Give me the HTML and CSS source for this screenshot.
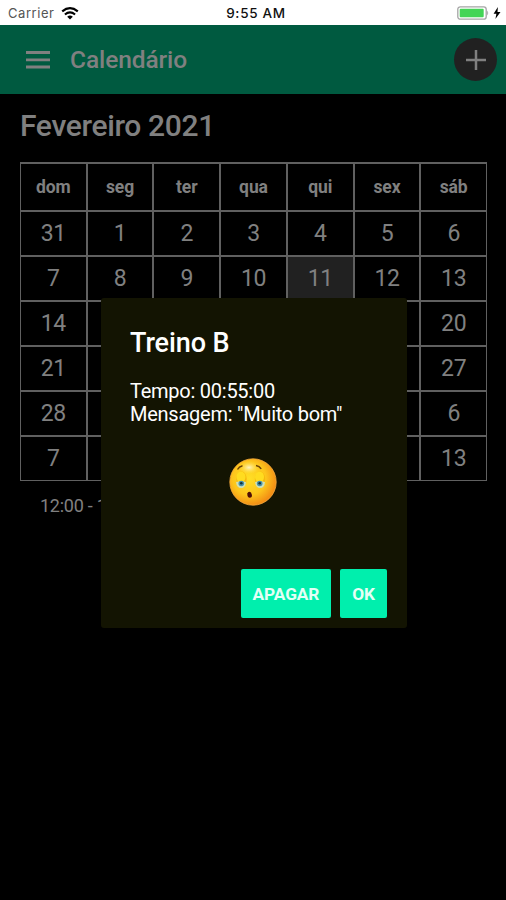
FILE: index.html
```html
<!DOCTYPE html>
<html lang="pt-BR">
<head>
    <meta charset="UTF-8">
    <meta name="viewport" content="width=device-width, initial-scale=1.0">
    <title>Calendário</title>
    <link rel="stylesheet" href="styles.css">
</head>
<body>
    <div class="status-bar">
        <div class="status-left">
            <span class="carrier">Carrier</span>
            <svg class="wifi" viewBox="0 0 18 13" width="18" height="13">
                <path d="M1.2 4.4 Q9 -2 16.8 4.4" fill="none" stroke="#000" stroke-width="2.2"/>
                <path d="M3.9 7.5 Q9 3.2 14.1 7.5" fill="none" stroke="#000" stroke-width="2.1"/>
                <path d="M6.2 9.7 Q9 7.4 11.8 9.7 L9 12.6 Z" fill="#000"/>
            </svg>
        </div>
        <span class="clock">9:55 AM</span>
        <div class="status-right">
            <svg viewBox="0 0 32 14" width="32" height="14">
                <rect x="0.8" y="0.8" width="28.4" height="12.4" rx="2.5" fill="#fff" stroke="#a5a5a5" stroke-width="1.3"/>
                <rect x="2.7" y="2.7" width="24" height="8.6" rx="1" fill="#43d556"/>
                <path d="M30.2 4.6 Q32.2 7 30.2 9.4 Z" fill="#a5a5a5"/>
            </svg>
            <svg viewBox="0 0 8 12" width="8" height="12">
                <path d="M4.9 0 L0.6 6.8 H3.4 L2.4 12 L7.5 4.9 H4.5 Z" fill="#000"/>
            </svg>
        </div>
    </div>

    <header class="toolbar">
        <svg class="menu-icon" viewBox="0 0 24 18" width="24" height="18">
            <path d="M0 1.5 H24 M0 8.8 H24 M0 16 H24" stroke="#808080" stroke-width="2.8"/>
        </svg>
        <h1>Calendário</h1>
        <button class="add-btn" aria-label="Adicionar">
            <svg viewBox="0 0 20 20" width="20" height="20">
                <path d="M0 10 H20 M10 0 V20" stroke="#808080" stroke-width="2.5"/>
            </svg>
        </button>
    </header>

    <main>
        <h2>Fevereiro 2021</h2>
        <div class="calendar">
            <div class="week-day">dom</div>
            <div class="week-day">seg</div>
            <div class="week-day">ter</div>
            <div class="week-day">qua</div>
            <div class="week-day">qui</div>
            <div class="week-day">sex</div>
            <div class="week-day">sáb</div>

            <div>31</div><div>1</div><div>2</div><div>3</div><div>4</div><div>5</div><div>6</div>
            <div>7</div><div>8</div><div>9</div><div>10</div><div class="today">11</div><div>12</div><div>13</div>
            <div>14</div><div></div><div></div><div></div><div></div><div></div><div>20</div>
            <div>21</div><div></div><div></div><div></div><div></div><div></div><div>27</div>
            <div>28</div><div></div><div></div><div></div><div></div><div></div><div>6</div>
            <div>7</div><div></div><div></div><div></div><div></div><div></div><div>13</div>
        </div>
        <p class="event">12:00 - 1</p>
    </main>

    <!-- Detalhe do treino -->
    <div class="modal">
        <h3>Treino B</h3>
        <p>Tempo: 00:55:00<br>Mensagem: "Muito bom"</p>
        <svg class="emoji" viewBox="0 0 48 48" width="48" height="48">
            <defs>
                <radialGradient id="face" cx="0.42" cy="0.42" r="0.6">
                    <stop offset="0" stop-color="#ffdf25"/>
                    <stop offset="0.6" stop-color="#fdc51c"/>
                    <stop offset="1" stop-color="#f28a14"/>
                </radialGradient>
                <radialGradient id="shine">
                    <stop offset="0" stop-color="#fff3c4"/>
                    <stop offset="1" stop-color="#ffdf45" stop-opacity="0"/>
                </radialGradient>
            </defs>
            <circle cx="24" cy="24" r="23.2" fill="url(#face)" stroke="#f5a93c" stroke-width="0.8"/>
            <ellipse cx="20" cy="9.5" rx="10" ry="6.5" fill="url(#shine)"/>
            <ellipse cx="12.5" cy="21" rx="5.2" ry="7.5" fill="#f5b80f"/>
            <ellipse cx="31" cy="21" rx="5.2" ry="7.5" fill="#f5b80f"/>
            <ellipse cx="12" cy="19" rx="4.5" ry="5.5" fill="#ffdc20"/>
            <ellipse cx="30.5" cy="19" rx="4.5" ry="5.5" fill="#ffdc20"/>
            <path d="M7 24 Q12 22.5 17 24 Q16.5 30 12 30 Q7.8 30 7 24 Z" fill="#cfe0b8"/>
            <path d="M26 24 Q31 22.5 36 24 Q35.5 30 31 30 Q26.8 30 26 24 Z" fill="#cfe0b8"/>
            <circle cx="12.3" cy="25.5" r="2.8" fill="#4790a8"/>
            <circle cx="30.7" cy="25.5" r="2.8" fill="#4790a8"/>
            <circle cx="12.3" cy="25.2" r="1.3" fill="#12303c"/>
            <circle cx="30.7" cy="25.2" r="1.3" fill="#12303c"/>
            <path d="M8.5 11.5 Q10 8.6 13.5 7.8 M27 7.5 Q30.5 8 32.2 10.8" fill="none" stroke="#6b4208" stroke-width="1.5"/>
            <path d="M18.3 35.5 Q19.5 32.5 22 34.5 Q24.3 39.3 21 39.8 Q18.3 40 18.3 35.5 Z" fill="#4e0d08"/>
        </svg>
        <div class="modal-actions">
            <button>APAGAR</button>
            <button>OK</button>
        </div>
    </div>
</body>
</html>
```

FILE: styles.css
```css
:root {
    --muted: #808080;
    --line: #606060;
    --accent: #00efad;
}

* {
    box-sizing: border-box;
    margin: 0;
    padding: 0;
}

body {
    font-family: Roboto, sans-serif;
    background: #000;
    color: var(--muted);
    height: 900px;
    overflow: hidden;
}

.status-bar {
    display: grid;
    grid-template-columns: 1fr auto 1fr;
    align-items: center;
    height: 25px;
    padding: 1px 5px 0 8px;
    background: #fff;
    font-family: Inter, sans-serif;
    font-size: 13px;
    color: #111;
}

.status-left,
.status-right {
    display: flex;
    align-items: center;
    gap: 7px;
}

.status-right {
    justify-content: flex-end;
    gap: 4px;
}

.carrier {
    color: #555;
    letter-spacing: 0.55px;
}

.clock {
    font-size: 13.5px;
    font-weight: 500;
    letter-spacing: 0.7px;
    margin-left: 3px;
}

.toolbar {
    display: flex;
    align-items: center;
    height: 69px;
    padding: 0 9px 0 26px;
    background: #005a40;
}

.toolbar h1 {
    flex: 1;
    margin-left: 20px;
    font-size: 24.5px;
    font-weight: 500;
    letter-spacing: -0.1px;
}

.add-btn {
    display: flex;
    align-items: center;
    justify-content: center;
    width: 43px;
    height: 43px;
    border: none;
    border-radius: 50%;
    background: #212121;
}

main {
    padding: 13px 19px 0 20px;
}

h2 {
    font-size: 30px;
    line-height: 38px;
    font-weight: 500;
    letter-spacing: -0.35px;
}

.calendar {
    display: grid;
    grid-template-columns: repeat(7, 1fr);
    grid-template-rows: 46px repeat(6, 1fr);
    gap: 2px;
    height: 319px;
    margin-top: 17px;
    padding: 1.5px 1px;
    background: var(--line);
}

.calendar > div {
    display: flex;
    align-items: center;
    justify-content: center;
    padding-top: 1px;
    background: #000;
    font-size: 23px;
    letter-spacing: -0.4px;
}

.calendar .week-day {
    padding: 0;
    font-size: 17.5px;
    font-weight: 700;
    letter-spacing: -0.1px;
}

.calendar .today {
    background: #212121;
}

.event {
    padding: 14px 20px;
    font-size: 18px;
    line-height: 22px;
    letter-spacing: -0.25px;
}

.modal {
    position: absolute;
    left: 101px;
    top: 298px;
    width: 306px;
    height: 330px;
    display: flex;
    flex-direction: column;
    padding: 28px 20px 10px 29px;
    border-radius: 3px;
    background: #131402;
    color: #fff;
}

.modal h3 {
    font-size: 27px;
    line-height: 34px;
    font-weight: 500;
    letter-spacing: -0.1px;
}

.modal p {
    margin-top: 20px;
    font-size: 20px;
    line-height: 23px;
    letter-spacing: -0.25px;
}

.emoji {
    margin: 32px 0 0 99px;
}

.modal-actions {
    display: flex;
    justify-content: flex-end;
    gap: 9px;
    margin-top: auto;
}

.modal-actions button {
    height: 49px;
    padding: 0 12px;
    border: none;
    border-radius: 2px;
    background: var(--accent);
    color: #e4fff6;
    font-family: inherit;
    font-size: 17.3px;
    font-weight: 700;
    letter-spacing: -0.1px;
}
```
